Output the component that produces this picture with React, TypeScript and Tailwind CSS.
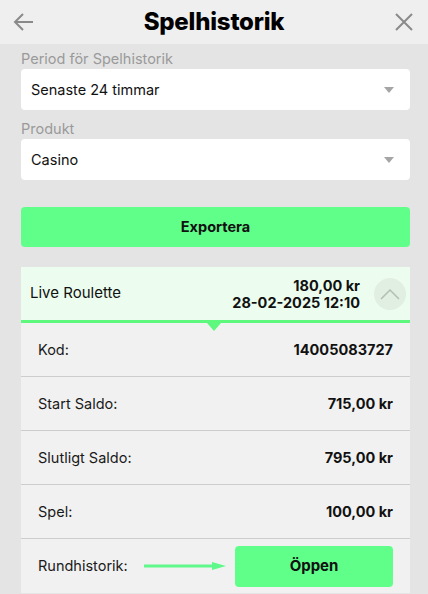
import React from "react";

const font = { fontFamily: "Inter, 'Noto Sans', sans-serif" };

function Caret() {
  return (
    <svg width="10" height="6" viewBox="0 0 10 6" className="text-[#a5a5a5]">
      <path d="M0 0h10L5 6z" fill="currentColor" />
    </svg>
  );
}

function SelectField({ label, value }: { label: string; value: string }) {
  return (
    <div className="flex flex-col">
      <span className="text-[14.5px] leading-[18px] text-[#9a9a9a] mb-[1px]">{label}</span>
      <div className="h-[41px] bg-white rounded-[4px] flex items-center justify-between pl-[10px] pr-[16px]">
        <span className="text-[14.5px] text-[#111]">{value}</span>
        <Caret />
      </div>
    </div>
  );
}

function Row({ label, value, last }: { label: string; value: string; last?: boolean }) {
  return (
    <div
      className={`h-[54px] flex items-center justify-between px-[17px] ${
        last ? "" : "border-b border-[#cdcdcd]"
      }`}
    >
      <span className="text-[14.5px] text-[#1a1a1a]">{label}</span>
      <span className="text-[14.5px] font-bold text-[#111]">{value}</span>
    </div>
  );
}

export default function App() {
  return (
    <div className="w-[428px] h-[594px] overflow-hidden bg-[#e4e4e4]" style={font}>
      {/* header */}
      <div className="h-[44px] bg-[#efefef] flex items-center justify-between px-[12px]">
        <svg width="24" height="24" viewBox="0 0 24 24" fill="none" stroke="#8a8a8a" strokeWidth="2">
          <path d="M21 12H3M11 4l-8 8 8 8" />
        </svg>
        <h1 className="text-[24px] font-extrabold text-black tracking-[-0.2px]">Spelhistorik</h1>
        <svg width="24" height="24" viewBox="0 0 24 24" fill="none" stroke="#8a8a8a" strokeWidth="2">
          <path d="M4 4l16 16M20 4L4 20" />
        </svg>
      </div>

      <div className="pl-[21px] pr-[18px] pt-[6px] flex flex-col">
        <div className="flex flex-col gap-[10px]">
          <SelectField label="Period för Spelhistorik" value="Senaste 24 timmar" />
          <SelectField label="Produkt" value="Casino" />
        </div>

        <button className="mt-[27px] h-[40px] rounded-[4px] bg-[#5fff8a] text-[14.5px] font-bold text-[#111]">
          Exportera
        </button>

        {/* card */}
        <div className="mt-[20px] flex flex-col">
          <div className="relative h-[56px] bg-[#ecfdef] border-b-[3px] border-[#5ff87f] flex items-center pl-[9px] pr-[4px]">
            <span className="text-[15px] text-[#111] flex-1">Live Roulette</span>
            <div className="flex flex-col items-end text-[14.5px] font-bold leading-[17px] text-[#111]">
              <span>180,00 kr</span>
              <span>28-02-2025 12:10</span>
            </div>
            <div className="ml-[14px] w-[32px] h-[32px] rounded-full bg-[#e1efe3] flex items-center justify-center">
              <svg width="20" height="12" viewBox="0 0 20 12" fill="none" stroke="#b4bdb5" strokeWidth="1.5">
                <path d="M1 11l9-9 9 9" />
              </svg>
            </div>
            <div className="absolute left-[186px] -bottom-[11px] w-0 h-0 border-l-[7px] border-r-[7px] border-t-[8px] border-l-transparent border-r-transparent border-t-[#5ff87f]" />
          </div>
          <div className="bg-[#f1f1f1] flex flex-col">
            <Row label="Kod:" value="14005083727" />
            <Row label="Start Saldo:" value="715,00 kr" />
            <Row label="Slutligt Saldo:" value="795,00 kr" />
            <Row label="Spel:" value="100,00 kr" />
            <div className="h-[54px] flex items-center pl-[17px] pr-[17px]">
              <span className="text-[14.5px] text-[#1a1a1a] w-[106px]">Rundhistorik:</span>
              <svg width="84" height="10" viewBox="0 0 84 10">
                <path d="M0 5h70" stroke="#5ff88a" strokeWidth="3" />
                <path d="M68 1l14 4-14 4z" fill="#5ff88a" />
              </svg>
              <button className="ml-[7px] flex-1 h-[41px] rounded-[4px] bg-[#5fff8a] text-[15px] font-bold text-[#111]">
                Öppen
              </button>
            </div>
          </div>
        </div>
      </div>
    </div>
  );
}
